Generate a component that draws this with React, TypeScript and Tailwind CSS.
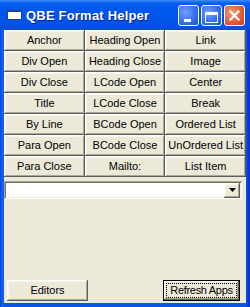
import React from "react";

const raised =
  "shadow-[inset_-1px_-1px_#5f5d55,inset_1px_1px_#ffffff,inset_-2px_-2px_#aca899,inset_2px_2px_#f7f5ee]";

const labels = [
  ["Anchor", "Heading Open", "Link"],
  ["Div Open", "Heading Close", "Image"],
  ["Div Close", "LCode Open", "Center"],
  ["Title", "LCode Close", "Break"],
  ["By Line", "BCode Open", "Ordered List"],
  ["Para Open", "BCode Close", "UnOrdered List"],
  ["Para Close", "Mailto:", "List Item"],
];

function Btn({ label }: { label: string }) {
  return (
    <div
      className={`h-[21px] flex items-center justify-center bg-[#ece9d8] text-black text-[11px] leading-none ${raised}`}
    >
      {label}
    </div>
  );
}

export default function App() {
  return (
    <div
      className="w-[250px] h-[307px] flex flex-col bg-[linear-gradient(to_right,#0831d9_0px,#0058ee_1px,#1667ee_3px,#0a55e5_4px,#0a55e5_246px,#0847d4_247px,#0831d9_250px)] overflow-hidden"
      style={{ fontFamily: '"Liberation Sans", Arial, sans-serif' }}
    >
      {/* Title bar */}
      <div className="h-[30px] shrink-0 flex items-center bg-[linear-gradient(to_bottom,#3d8ff5_0px,#0a5ff0_3px,#0058ee_8px,#0055e8_20px,#0a4fd8_28px,#0a48d0_30px)] relative">
        <div className="ml-[7px] w-[15px] h-[10px] bg-white border border-[#1d3f9a] border-t-[2px]" />
        <div className="ml-[4px] text-white font-bold text-[13px] leading-none tracking-[0.2px] [text-shadow:1px_1px_#0a1e8a]">
          QBE Format Helper
        </div>
        <div className="ml-auto mr-[5px] flex gap-[2px] mt-[1px]">
          <div className="w-[21px] h-[21px] rounded-[3px] border border-white bg-[radial-gradient(circle_at_35%_35%,#6da0ff,#2c64e8_70%,#1e4fd0)] relative">
            <div className="absolute left-[5px] top-[13px] w-[7px] h-[3px] bg-white" />
          </div>
          <div className="w-[21px] h-[21px] rounded-[3px] border border-white bg-[radial-gradient(circle_at_35%_35%,#6da0ff,#2c64e8_70%,#1e4fd0)] relative">
            <div className="absolute left-[3px] top-[6px] w-[13px] h-[11px] border border-white border-t-[3px]" />
          </div>
          <div className="w-[21px] h-[21px] rounded-[3px] border border-white bg-[radial-gradient(circle_at_35%_35%,#f29a7c,#e0552f_65%,#c63b1c)] flex items-center justify-center">
            <svg width="11" height="11" viewBox="0 0 11 11">
              <path d="M1.5 1.5 L9.5 9.5 M9.5 1.5 L1.5 9.5" stroke="white" strokeWidth="2.2" strokeLinecap="square" />
            </svg>
          </div>
        </div>
      </div>

      {/* Client */}
      <div className="mx-[4px] mb-[4px] flex-1 bg-[#ece9d8] flex flex-col">
        <div className="grid grid-cols-3">
          {labels.flat().map((l) => (
            <Btn key={l} label={l} />
          ))}
        </div>

        {/* Combo box */}
        <div className="mt-[4px] w-[238px] h-[18px] bg-white shadow-[inset_1px_1px_#aca899,inset_-1px_-1px_#ffffff,inset_2px_2px_#716f64,inset_-2px_-2px_#f1efe2] flex justify-end items-center pr-[1px]">
          <div className={`w-[16px] h-[15px] mr-[1px] bg-[#ece9d8] flex items-center justify-center ${raised}`}>
            <svg width="7" height="4" viewBox="0 0 7 4">
              <path d="M0 0 H7 L3.5 4 Z" fill="black" />
            </svg>
          </div>
        </div>

        <div className="flex-1" />

        <div className="flex justify-between items-end pl-[3px] pr-[6px] pb-[2px]">
          <div className={`w-[81px] h-[21px] flex items-center justify-center bg-[#ece9d8] text-[11px] leading-none text-black ${raised}`}>
            Editors
          </div>
          <div className="w-[77px] h-[21px] border border-black bg-[#ece9d8] shadow-[inset_-1px_-1px_#5f5d55,inset_1px_1px_#ffffff,inset_-2px_-2px_#aca899] px-[2px] py-[2px]">
            <div className="w-full h-full border border-dotted border-black flex items-center justify-center text-[11px] leading-none tracking-[-0.3px] text-black whitespace-nowrap">
              Refresh Apps
            </div>
          </div>
        </div>
      </div>
    </div>
  );
}
